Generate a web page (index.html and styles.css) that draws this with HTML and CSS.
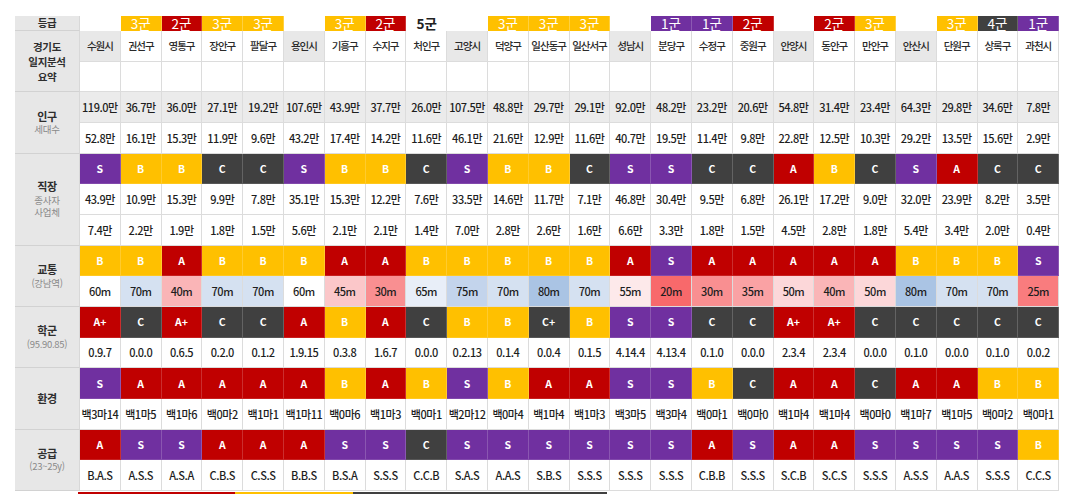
FILE: index.html
```html
<!DOCTYPE html>
<html lang="ko">
<head>
<meta charset="utf-8">
<title>경기도 입지분석 요약</title>
<link rel="stylesheet" href="styles.css">
</head>
<body>
<div class="sheet">
  <!-- row: 등급 -->
  <div class="c h hg">등급</div>
  <div class="t"></div>
  <div class="t o">3군</div>
  <div class="t r">2군</div>
  <div class="t o">3군</div>
  <div class="t o">3군</div>
  <div class="t"></div>
  <div class="t o">3군</div>
  <div class="t r">2군</div>
  <div class="t plain">5군</div>
  <div class="t"></div>
  <div class="t o">3군</div>
  <div class="t o">3군</div>
  <div class="t o">3군</div>
  <div class="t"></div>
  <div class="t p">1군</div>
  <div class="t p">1군</div>
  <div class="t r">2군</div>
  <div class="t"></div>
  <div class="t r">2군</div>
  <div class="t o">3군</div>
  <div class="t"></div>
  <div class="t o">3군</div>
  <div class="t k">4군</div>
  <div class="t p">1군</div>

  <!-- row: names -->
  <div class="c h r2 title"><span>경기도</span><span>일지분석</span><span>요약</span></div>
  <div class="c nm city">수원시</div>
  <div class="c nm">권선구</div>
  <div class="c nm">영통구</div>
  <div class="c nm">장안구</div>
  <div class="c nm">팔달구</div>
  <div class="c nm city">용인시</div>
  <div class="c nm">기흥구</div>
  <div class="c nm">수지구</div>
  <div class="c nm">처인구</div>
  <div class="c nm city">고양시</div>
  <div class="c nm">덕양구</div>
  <div class="c nm">일산동구</div>
  <div class="c nm">일산서구</div>
  <div class="c nm city">성남시</div>
  <div class="c nm">분당구</div>
  <div class="c nm">수정구</div>
  <div class="c nm">중원구</div>
  <div class="c nm city">안양시</div>
  <div class="c nm">동안구</div>
  <div class="c nm">만안구</div>
  <div class="c nm city">안산시</div>
  <div class="c nm">단원구</div>
  <div class="c nm">상록구</div>
  <div class="c nm">과천시</div>

  <!-- row: blank -->
  <div class="c"></div><div class="c"></div><div class="c"></div><div class="c"></div>
  <div class="c"></div><div class="c"></div><div class="c"></div><div class="c"></div>
  <div class="c"></div><div class="c"></div><div class="c"></div><div class="c"></div>
  <div class="c"></div><div class="c"></div><div class="c"></div><div class="c"></div>
  <div class="c"></div><div class="c"></div><div class="c"></div><div class="c"></div>
  <div class="c"></div><div class="c"></div><div class="c"></div><div class="c"></div>

  <!-- 인구 -->
  <div class="c h r2">인구<small>세대수</small></div>
  <div class="c alt">119.0만</div>
  <div class="c alt">36.7만</div>
  <div class="c alt">36.0만</div>
  <div class="c alt">27.1만</div>
  <div class="c alt">19.2만</div>
  <div class="c alt">107.6만</div>
  <div class="c alt">43.9만</div>
  <div class="c alt">37.7만</div>
  <div class="c alt">26.0만</div>
  <div class="c alt">107.5만</div>
  <div class="c alt">48.8만</div>
  <div class="c alt">29.7만</div>
  <div class="c alt">29.1만</div>
  <div class="c alt">92.0만</div>
  <div class="c alt">48.2만</div>
  <div class="c alt">23.2만</div>
  <div class="c alt">20.6만</div>
  <div class="c alt">54.8만</div>
  <div class="c alt">31.4만</div>
  <div class="c alt">23.4만</div>
  <div class="c alt">64.3만</div>
  <div class="c alt">29.8만</div>
  <div class="c alt">34.6만</div>
  <div class="c alt">7.8만</div>

  <div class="c">52.8만</div>
  <div class="c">16.1만</div>
  <div class="c">15.3만</div>
  <div class="c">11.9만</div>
  <div class="c">9.6만</div>
  <div class="c">43.2만</div>
  <div class="c">17.4만</div>
  <div class="c">14.2만</div>
  <div class="c">11.6만</div>
  <div class="c">46.1만</div>
  <div class="c">21.6만</div>
  <div class="c">12.9만</div>
  <div class="c">11.6만</div>
  <div class="c">40.7만</div>
  <div class="c">19.5만</div>
  <div class="c">11.4만</div>
  <div class="c">9.8만</div>
  <div class="c">22.8만</div>
  <div class="c">12.5만</div>
  <div class="c">10.3만</div>
  <div class="c">29.2만</div>
  <div class="c">13.5만</div>
  <div class="c">15.6만</div>
  <div class="c">2.9만</div>

  <!-- 직장 -->
  <div class="c h r3">직장<small>종사자</small><small>사업체</small></div>
  <div class="c g gS">S</div>
  <div class="c g gB">B</div>
  <div class="c g gB">B</div>
  <div class="c g gC">C</div>
  <div class="c g gC">C</div>
  <div class="c g gS">S</div>
  <div class="c g gB">B</div>
  <div class="c g gB">B</div>
  <div class="c g gC">C</div>
  <div class="c g gS">S</div>
  <div class="c g gB">B</div>
  <div class="c g gB">B</div>
  <div class="c g gC">C</div>
  <div class="c g gS">S</div>
  <div class="c g gS">S</div>
  <div class="c g gC">C</div>
  <div class="c g gC">C</div>
  <div class="c g gA">A</div>
  <div class="c g gB">B</div>
  <div class="c g gC">C</div>
  <div class="c g gS">S</div>
  <div class="c g gA">A</div>
  <div class="c g gC">C</div>
  <div class="c g gC">C</div>

  <div class="c">43.9만</div>
  <div class="c">10.9만</div>
  <div class="c">15.3만</div>
  <div class="c">9.9만</div>
  <div class="c">7.8만</div>
  <div class="c">35.1만</div>
  <div class="c">15.3만</div>
  <div class="c">12.2만</div>
  <div class="c">7.6만</div>
  <div class="c">33.5만</div>
  <div class="c">14.6만</div>
  <div class="c">11.7만</div>
  <div class="c">7.1만</div>
  <div class="c">46.8만</div>
  <div class="c">30.4만</div>
  <div class="c">9.5만</div>
  <div class="c">6.8만</div>
  <div class="c">26.1만</div>
  <div class="c">17.2만</div>
  <div class="c">9.0만</div>
  <div class="c">32.0만</div>
  <div class="c">23.9만</div>
  <div class="c">8.2만</div>
  <div class="c">3.5만</div>

  <div class="c">7.4만</div>
  <div class="c">2.2만</div>
  <div class="c">1.9만</div>
  <div class="c">1.8만</div>
  <div class="c">1.5만</div>
  <div class="c">5.6만</div>
  <div class="c">2.1만</div>
  <div class="c">2.1만</div>
  <div class="c">1.4만</div>
  <div class="c">7.0만</div>
  <div class="c">2.8만</div>
  <div class="c">2.6만</div>
  <div class="c">1.6만</div>
  <div class="c">6.6만</div>
  <div class="c">3.3만</div>
  <div class="c">1.8만</div>
  <div class="c">1.5만</div>
  <div class="c">4.5만</div>
  <div class="c">2.8만</div>
  <div class="c">1.8만</div>
  <div class="c">5.4만</div>
  <div class="c">3.4만</div>
  <div class="c">2.0만</div>
  <div class="c">0.4만</div>

  <!-- 교통 -->
  <div class="c h r2">교통<small>(강남역)</small></div>
  <div class="c g gB">B</div>
  <div class="c g gB">B</div>
  <div class="c g gA">A</div>
  <div class="c g gB">B</div>
  <div class="c g gB">B</div>
  <div class="c g gB">B</div>
  <div class="c g gA">A</div>
  <div class="c g gA">A</div>
  <div class="c g gB">B</div>
  <div class="c g gB">B</div>
  <div class="c g gB">B</div>
  <div class="c g gB">B</div>
  <div class="c g gB">B</div>
  <div class="c g gA">A</div>
  <div class="c g gS">S</div>
  <div class="c g gA">A</div>
  <div class="c g gA">A</div>
  <div class="c g gA">A</div>
  <div class="c g gA">A</div>
  <div class="c g gA">A</div>
  <div class="c g gB">B</div>
  <div class="c g gB">B</div>
  <div class="c g gB">B</div>
  <div class="c g gS">S</div>

  <div class="c d60">60m</div>
  <div class="c d70">70m</div>
  <div class="c d40">40m</div>
  <div class="c d70">70m</div>
  <div class="c d70">70m</div>
  <div class="c d60">60m</div>
  <div class="c d45">45m</div>
  <div class="c d30">30m</div>
  <div class="c d65">65m</div>
  <div class="c d75">75m</div>
  <div class="c d70">70m</div>
  <div class="c d80">80m</div>
  <div class="c d70">70m</div>
  <div class="c d55">55m</div>
  <div class="c d20">20m</div>
  <div class="c d30">30m</div>
  <div class="c d35">35m</div>
  <div class="c d50">50m</div>
  <div class="c d40">40m</div>
  <div class="c d50">50m</div>
  <div class="c d80">80m</div>
  <div class="c d70">70m</div>
  <div class="c d70">70m</div>
  <div class="c d25">25m</div>

  <!-- 학군 -->
  <div class="c h r2">학군<small>(95.90.85)</small></div>
  <div class="c g gA">A+</div>
  <div class="c g gC">C</div>
  <div class="c g gA">A+</div>
  <div class="c g gC">C</div>
  <div class="c g gC">C</div>
  <div class="c g gA">A</div>
  <div class="c g gB">B</div>
  <div class="c g gA">A</div>
  <div class="c g gC">C</div>
  <div class="c g gB">B</div>
  <div class="c g gB">B</div>
  <div class="c g gC">C+</div>
  <div class="c g gB">B</div>
  <div class="c g gS">S</div>
  <div class="c g gS">S</div>
  <div class="c g gC">C</div>
  <div class="c g gC">C</div>
  <div class="c g gA">A+</div>
  <div class="c g gA">A+</div>
  <div class="c g gC">C</div>
  <div class="c g gC">C</div>
  <div class="c g gC">C</div>
  <div class="c g gC">C</div>
  <div class="c g gC">C</div>

  <div class="c">0.9.7</div>
  <div class="c">0.0.0</div>
  <div class="c">0.6.5</div>
  <div class="c">0.2.0</div>
  <div class="c">0.1.2</div>
  <div class="c">1.9.15</div>
  <div class="c">0.3.8</div>
  <div class="c">1.6.7</div>
  <div class="c">0.0.0</div>
  <div class="c">0.2.13</div>
  <div class="c">0.1.4</div>
  <div class="c">0.0.4</div>
  <div class="c">0.1.5</div>
  <div class="c">4.14.4</div>
  <div class="c">4.13.4</div>
  <div class="c">0.1.0</div>
  <div class="c">0.0.0</div>
  <div class="c">2.3.4</div>
  <div class="c">2.3.4</div>
  <div class="c">0.0.0</div>
  <div class="c">0.1.0</div>
  <div class="c">0.0.0</div>
  <div class="c">0.1.0</div>
  <div class="c">0.0.2</div>

  <!-- 환경 -->
  <div class="c h r2">환경</div>
  <div class="c g gS">S</div>
  <div class="c g gA">A</div>
  <div class="c g gA">A</div>
  <div class="c g gA">A</div>
  <div class="c g gA">A</div>
  <div class="c g gA">A</div>
  <div class="c g gB">B</div>
  <div class="c g gA">A</div>
  <div class="c g gB">B</div>
  <div class="c g gS">S</div>
  <div class="c g gB">B</div>
  <div class="c g gA">A</div>
  <div class="c g gA">A</div>
  <div class="c g gS">S</div>
  <div class="c g gS">S</div>
  <div class="c g gB">B</div>
  <div class="c g gC">C</div>
  <div class="c g gA">A</div>
  <div class="c g gA">A</div>
  <div class="c g gC">C</div>
  <div class="c g gA">A</div>
  <div class="c g gA">A</div>
  <div class="c g gB">B</div>
  <div class="c g gB">B</div>

  <div class="c">백3마14</div>
  <div class="c">백1마5</div>
  <div class="c">백1마6</div>
  <div class="c">백0마2</div>
  <div class="c">백1마1</div>
  <div class="c">백1마11</div>
  <div class="c">백0마6</div>
  <div class="c">백1마3</div>
  <div class="c">백0마1</div>
  <div class="c">백2마12</div>
  <div class="c">백0마4</div>
  <div class="c">백1마4</div>
  <div class="c">백1마3</div>
  <div class="c">백3마5</div>
  <div class="c">백3마4</div>
  <div class="c">백0마1</div>
  <div class="c">백0마0</div>
  <div class="c">백1마4</div>
  <div class="c">백1마4</div>
  <div class="c">백0마0</div>
  <div class="c">백1마7</div>
  <div class="c">백1마5</div>
  <div class="c">백0마2</div>
  <div class="c">백0마1</div>

  <!-- 공급 -->
  <div class="c h r2">공급<small>(23~25y)</small></div>
  <div class="c g gA">A</div>
  <div class="c g gS">S</div>
  <div class="c g gS">S</div>
  <div class="c g gA">A</div>
  <div class="c g gA">A</div>
  <div class="c g gA">A</div>
  <div class="c g gS">S</div>
  <div class="c g gS">S</div>
  <div class="c g gC">C</div>
  <div class="c g gS">S</div>
  <div class="c g gS">S</div>
  <div class="c g gS">S</div>
  <div class="c g gS">S</div>
  <div class="c g gS">S</div>
  <div class="c g gS">S</div>
  <div class="c g gA">A</div>
  <div class="c g gS">S</div>
  <div class="c g gA">A</div>
  <div class="c g gA">A</div>
  <div class="c g gS">S</div>
  <div class="c g gS">S</div>
  <div class="c g gS">S</div>
  <div class="c g gS">S</div>
  <div class="c g gB">B</div>

  <div class="c">B.A.S</div>
  <div class="c">A.S.S</div>
  <div class="c">A.S.A</div>
  <div class="c">C.B.S</div>
  <div class="c">C.S.S</div>
  <div class="c">B.B.S</div>
  <div class="c">B.S.A</div>
  <div class="c">S.S.S</div>
  <div class="c">C.C.B</div>
  <div class="c">S.A.S</div>
  <div class="c">A.A.S</div>
  <div class="c">S.B.S</div>
  <div class="c">S.S.S</div>
  <div class="c">S.S.S</div>
  <div class="c">S.S.S</div>
  <div class="c">C.B.B</div>
  <div class="c">S.S.S</div>
  <div class="c">S.C.B</div>
  <div class="c">S.C.S</div>
  <div class="c">S.S.S</div>
  <div class="c">A.S.S</div>
  <div class="c">A.A.S</div>
  <div class="c">S.S.S</div>
  <div class="c">C.C.S</div>
</div>
<div class="tail">
  <div class="seg seg-r"></div>
  <div class="seg seg-o"></div>
  <div class="seg seg-k"></div>
</div>
</body>
</html>
```

FILE: styles.css
```css
* { box-sizing: border-box; }

html, body {
  margin: 0;
  overflow: hidden;
  background: #fff;
}

body {
  padding: 16px 0 0 15px;
  font-family: "Noto Sans CJK KR", "Noto Sans", sans-serif;
  color: #222;
}

.sheet {
  display: grid;
  grid-template-columns: 65px repeat(24, 40.8px);
  grid-template-rows: 15px repeat(15, 30.67px);
  width: 1044.2px;
}

.c {
  display: flex;
  align-items: center;
  justify-content: center;
  border-right: 1px solid #dcdcdc;
  border-bottom: 1px solid #dcdcdc;
  font-size: 11px;
  font-weight: 500;
  letter-spacing: -0.45px;
  white-space: nowrap;
  overflow: hidden;
  color: #1e1e1e;
}

/* header column */
.h {
  flex-direction: column;
  background: #e7e7e7;
  border-right: 1px solid #d8d8d8;
  border-bottom: 1px solid #d2d2d2;
  font-size: 11px;
  font-weight: 700;
  color: #2e2e2e;
  line-height: 13.5px;
  letter-spacing: -0.3px;
  text-align: center;
}
.h small {
  font-size: 9.5px;
  font-weight: 400;
  color: #8a8a8a;
  line-height: 12px;
}
.title { font-size: 10.5px; line-height: 15px; }
.hg { font-size: 10.5px; }
.r2 { grid-row: span 2; }
.r3 { grid-row: span 3; }

/* top grade badges */
.t {
  display: flex;
  align-items: center;
  justify-content: center;
  font-size: 13.5px;
  line-height: 1;
  color: #fff;
}
.t.o { background: #ffc000; border-right: 1px solid rgba(255,255,255,.25); }
.t.r { background: #c00000; border-right: 1px solid rgba(255,255,255,.2); }
.t.p { background: #7030a0; border-right: 1px solid rgba(255,255,255,.2); }
.t.k { background: #404040; border-right: 1px solid rgba(255,255,255,.2); }
.t.plain { color: #222; font-weight: 700; }

/* names */
.nm {
  font-size: 10.5px;
  letter-spacing: -1px;
  font-weight: 500;
  color: #2a2a2a;
}
.city { background: #e8e8e8; }
.alt { background: #ebebeb; }

/* grade cells */
.g {
  color: #fff;
  font-weight: 700;
  font-size: 10.5px;
  letter-spacing: 0;
  border-right-color: rgba(255,255,255,.18);
  border-bottom-color: rgba(255,255,255,.12);
}
.gS { background: #7030a0; }
.gA { background: #c00000; }
.gB { background: #ffc000; }
.gC { background: #404040; }

/* distance heat map */
.d20 { background: #f8696b; }
.d25 { background: #f97c7e; }
.d30 { background: #f98f91; }
.d35 { background: #faa2a4; }
.d40 { background: #fab5b7; }
.d45 { background: #fbc7c9; }
.d50 { background: #fcd7d9; }
.d55 { background: #fde9ea; }
.d60 { background: #ffffff; }
.d65 { background: #e8eef8; }
.d70 { background: #d5e1f1; }
.d75 { background: #c3d4ec; }
.d80 { background: #aac4e4; }

/* partially visible next block */
.tail {
  display: flex;
  margin: 1px 0 0 63px;
  height: 10px;
}
.seg { height: 10px; }
.seg-r { width: 157px; background: #c00000; }
.seg-o { width: 118px; background: #ffc000; }
.seg-k { width: 254px; background: #404040; }
```
